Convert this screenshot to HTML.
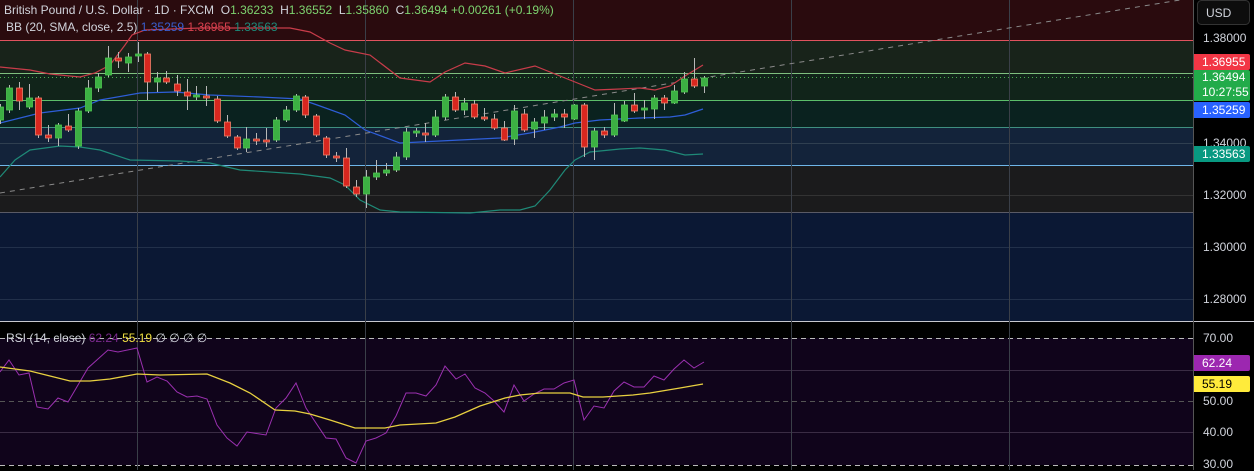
<!DOCTYPE html>
<html><head><meta charset="utf-8"><style>
html,body{margin:0;padding:0;background:#000;width:1254px;height:470px;overflow:hidden;font-family:"Liberation Sans",sans-serif}
#c{position:absolute;left:0;top:0}
.t{position:absolute;font-size:12px;color:#d1d4dc;white-space:nowrap;line-height:14px}
.ax{position:absolute;left:1203px;font-size:12px;color:#d1d4dc;line-height:14px}
.bd{position:absolute;left:1194px;width:56px;font-size:12px;line-height:16px;color:#fff;padding-left:8px;box-sizing:border-box;border-radius:0 2px 2px 0}
</style></head><body>
<svg id="c" width="1254" height="470" xmlns="http://www.w3.org/2000/svg">
<rect x="0" y="0" width="1193" height="40" fill="#2a0b0e"/>
<rect x="0" y="40" width="1193" height="33" fill="#18231a"/>
<rect x="0" y="73" width="1193" height="27" fill="#11241a"/>
<rect x="0" y="100" width="1193" height="27" fill="#0a221f"/>
<rect x="0" y="127" width="1193" height="38" fill="#13233a"/>
<rect x="0" y="165" width="1193" height="47" fill="#1b1b1c"/>
<rect x="0" y="212" width="1193" height="109" fill="#0b1834"/>
<line x1="0" y1="40.5" x2="1193" y2="40.5" stroke="#e0525e" stroke-width="1"/>
<line x1="0" y1="73.5" x2="1193" y2="73.5" stroke="#7fbf7f"/>
<line x1="0" y1="77.5" x2="1193" y2="77.5" stroke="#4caf50" stroke-dasharray="1,3"/>
<line x1="0" y1="100.5" x2="1193" y2="100.5" stroke="#5cbf6a"/>
<line x1="0" y1="127.5" x2="1193" y2="127.5" stroke="#3f8f80"/>
<line x1="0" y1="143.5" x2="1193" y2="143.5" stroke="#2f3f50"/>
<line x1="0" y1="165.5" x2="1193" y2="165.5" stroke="#6fb6e8"/>
<line x1="0" y1="195.5" x2="1193" y2="195.5" stroke="#333"/>
<line x1="0" y1="212.5" x2="1193" y2="212.5" stroke="#5a5a66"/>
<line x1="0" y1="247.5" x2="1193" y2="247.5" stroke="#22304a"/>
<line x1="0" y1="299.5" x2="1193" y2="299.5" stroke="#22304a"/>
<rect x="0" y="322" width="1193" height="148" fill="#000"/>
<rect x="0" y="338" width="1193" height="127" fill="#10041b"/>
<line x1="0" y1="321.5" x2="1254" y2="321.5" stroke="#c8c8d0"/>
<line x1="1193.5" y1="0" x2="1193.5" y2="470" stroke="#555"/>
<line x1="0" y1="338.5" x2="1193" y2="338.5" stroke="#bbb" stroke-dasharray="5,4"/>
<line x1="0" y1="465.5" x2="1193" y2="465.5" stroke="#bbb" stroke-dasharray="5,4"/>
<line x1="0" y1="401.5" x2="1193" y2="401.5" stroke="#555" stroke-dasharray="5,4"/>
<line x1="0" y1="370.5" x2="1193" y2="370.5" stroke="#3a2c44"/>
<line x1="0" y1="432.5" x2="1193" y2="432.5" stroke="#3a2c44"/>
<g stroke="#3a3f48">
<line x1="137.5" y1="0" x2="137.5" y2="470"/><line x1="365.5" y1="0" x2="365.5" y2="470"/>
<line x1="573.5" y1="0" x2="573.5" y2="470"/><line x1="791.5" y1="0" x2="791.5" y2="470"/>
<line x1="1009.5" y1="0" x2="1009.5" y2="470"/></g>
<line x1="0" y1="193" x2="1180" y2="0" stroke="#8a8a8a" stroke-dasharray="5,5"/>
<g id="bb" fill="none" stroke-width="1.2"></g>
<g id="cd"></g>
<g id="rsi" fill="none"></g>
<rect x="1197.5" y="0.5" width="52" height="24" rx="4" fill="#0d0d0d" stroke="#333"/>
</svg>
<div class="t" style="left:4px;top:3px;color:#d1d4dc">British Pound / U.S. Dollar · 1D · FXCM &nbsp;O<span style="color:#7dd36f">1.36233</span> &nbsp;H<span style="color:#7dd36f">1.36552</span> &nbsp;L<span style="color:#7dd36f">1.35860</span> &nbsp;C<span style="color:#7dd36f">1.36494</span> <span style="color:#7dd36f">+0.00261 (+0.19%)</span></div>
<div class="t" style="left:6px;top:20px">BB (20, SMA, close, 2.5) <span style="color:#3a5fd0">1.35259</span> <span style="color:#d9404e">1.36955</span> <span style="color:#1c8a7a">1.33563</span></div>
<div class="t" style="left:6px;top:331px">RSI (14, close) <span style="color:#7b2a8e">62.24</span> <span style="color:#f0e040">55.19</span> ∅ ∅ ∅ ∅</div>
<div class="t" style="left:1206px;top:6px">USD</div>
<div class="ax" style="top:31px">1.38000</div>
<div class="ax" style="top:136px">1.34000</div>
<div class="ax" style="top:188px">1.32000</div>
<div class="ax" style="top:240px">1.30000</div>
<div class="ax" style="top:292px">1.28000</div>
<div class="ax" style="top:331px">70.00</div>
<div class="ax" style="top:394px">50.00</div>
<div class="ax" style="top:425px">40.00</div>
<div class="ax" style="top:457px">30.00</div>
<div class="bd" style="top:54px;background:#f23645">1.36955</div>
<div class="bd" style="top:70px;height:31px;background:#22ab4a;line-height:15px">1.36494<br>10:27:55</div>
<div class="bd" style="top:102px;background:#2962ff">1.35259</div>
<div class="bd" style="top:146px;background:#089981">1.33563</div>
<div class="bd" style="top:355px;background:#9c27b0">62.24</div>
<div class="bd" style="top:376px;background:#ffeb3b;color:#000">55.19</div>
<script>
var NS="http://www.w3.org/2000/svg";
function pl(g,pts,col,w){var p=document.createElementNS(NS,"polyline");p.setAttribute("points",pts.map(function(a){return a.join(",")}).join(" "));p.setAttribute("stroke",col);p.setAttribute("fill","none");p.setAttribute("stroke-width",w||1.2);g.appendChild(p);}
var bb=document.getElementById("bb");
pl(bb,[[0,67],[30,70],[50,74],[80,77],[95,73],[110,65],[125,45],[132,35],[145,30],[200,28],[290,28],[310,32],[330,43],[345,50],[370,55],[400,78],[430,82],[445,72],[465,63],[485,66],[505,73],[535,66],[560,76],[575,82],[595,90],[620,89],[640,88],[655,90],[670,86],[685,76],[703,65]],"#c83c4a");
pl(bb,[[0,123],[40,113],[80,108],[100,100],[140,93],[175,92],[210,95],[260,97],[300,99],[320,106],[345,115],[365,130],[400,143],[440,141],[480,139],[500,138],[530,133],[560,127],[575,123],[600,120],[640,118],[670,117],[685,115],[703,109]],"#2e5ed8");
pl(bb,[[0,177],[15,160],[30,150],[60,146],[80,147],[100,150],[130,160],[180,161],[210,163],[240,170],[300,174],[330,178],[345,185],[360,200],[380,210],[400,212],[470,213],[500,210],[520,210],[535,206],[550,190],[565,170],[575,160],[590,152],[620,149],[640,148],[665,150],[685,155],[703,154]],"#1f8a78");
var C=[[0,107,120,104,124,'g'],[9,88,110,85,113,'g'],[19,88,101,82,110,'r'],[29,98,107,84,109,'g'],[38,98,135,96,138,'r'],[48,135,138,125,142,'r'],[58,125,138,123,146,'g'],[68,126,130,114,132,'r'],[78,111,146,108,149,'g'],[88,88,111,80,113,'g'],[98,77,88,73,92,'g'],[108,58,75,46,77,'g'],[118,58,61,52,68,'r'],[128,57,63,53,72,'g'],[138,54,56,42,62,'g'],[147,54,82,52,100,'r'],[157,78,82,72,92,'g'],[166,78,82,71,84,'r'],[177,84,91,75,96,'r'],[187,92,96,79,110,'r'],[196,95,97,86,100,'g'],[206,96,98,86,106,'r'],[217,99,121,96,123,'r'],[227,122,136,115,138,'r'],[237,137,148,135,150,'r'],[246,139,148,127,152,'g'],[256,139,140,133,145,'r'],[266,140,141,128,147,'r'],[276,120,140,117,142,'g'],[286,110,120,106,122,'g'],[296,96,110,94,112,'g'],[305,97,115,95,118,'r'],[316,116,135,114,137,'r'],[326,138,155,136,158,'r'],[336,156,158,152,162,'r'],[346,158,186,148,188,'r'],[356,187,194,180,197,'r'],[366,177,194,170,208,'g'],[376,173,177,160,180,'g'],[386,170,173,163,176,'g'],[396,157,170,152,172,'g'],[406,132,157,128,160,'g'],[416,131,133,128,137,'g'],[425,133,135,123,142,'r'],[435,117,135,110,137,'g'],[445,97,117,94,120,'g'],[455,97,110,92,112,'r'],[464,103,110,98,115,'g'],[474,104,117,100,119,'r'],[484,117,119,108,121,'r'],[494,119,128,114,130,'r'],[504,128,140,121,141,'r'],[514,111,139,105,145,'g'],[524,114,130,109,132,'r'],[534,122,129,118,138,'g'],[544,117,123,110,130,'g'],[554,114,117,109,121,'g'],[564,114,117,109,128,'r'],[574,105,119,104,120,'g'],[584,105,147,103,157,'r'],[594,131,147,128,160,'g'],[604,131,135,127,138,'r'],[614,115,135,103,137,'g'],[624,105,121,101,122,'g'],[634,105,111,93,113,'r'],[644,108,110,100,119,'g'],[654,98,109,95,119,'g'],[664,98,103,95,110,'r'],[674,91,103,85,104,'g'],[684,79,92,72,94,'g'],[694,79,86,58,88,'r'],[704,78,86,76,93,'g']];
var cd=document.getElementById("cd");
C.forEach(function(c){var col=c[5]=='g'?'#3cb043':'#d8271f',bc=c[5]=='g'?'#4ec752':'#f0806a';
var l=document.createElementNS(NS,"line");l.setAttribute("x1",c[0]+.5);l.setAttribute("x2",c[0]+.5);l.setAttribute("y1",c[3]);l.setAttribute("y2",c[4]);l.setAttribute("stroke","#b8b8b8");cd.appendChild(l);
var r=document.createElementNS(NS,"rect");r.setAttribute("x",c[0]-2.5);r.setAttribute("y",c[1]);r.setAttribute("width",6);r.setAttribute("height",Math.max(2,c[2]-c[1]));r.setAttribute("fill",col);r.setAttribute("stroke",bc);r.setAttribute("stroke-width",.8);cd.appendChild(r);});
var rs=document.getElementById("rsi");
pl(rs,[[0,372],[9,360],[19,375],[29,373],[37,407],[48,409],[58,398],[68,402],[88,368],[108,350],[118,352],[137,348],[147,382],[157,377],[167,381],[177,392],[187,397],[197,396],[207,399],[217,425],[227,438],[237,446],[247,432],[266,435],[276,408],[286,398],[296,383],[306,408],[326,438],[336,439],[346,458],[356,463],[366,441],[376,438],[386,433],[396,416],[406,393],[416,393],[426,396],[436,385],[445,366],[456,379],[465,374],[475,388],[485,393],[494,401],[504,412],[514,385],[524,401],[534,394],[544,389],[554,389],[564,383],[574,380],[584,420],[594,406],[604,408],[614,391],[624,382],[634,387],[644,387],[654,376],[664,380],[674,369],[684,360],[694,368],[704,362]],"#9b30b0",1);
pl(rs,[[0,367],[30,371],[50,376],[70,381],[90,381],[110,379],[137,374],[160,375],[207,374],[230,383],[250,393],[275,410],[295,411],[310,414],[330,420],[355,428],[385,428],[400,425],[436,423],[455,417],[480,406],[505,398],[520,395],[540,393],[570,393],[583,397],[603,397],[633,395],[650,393],[680,388],[703,384]],"#e8d040",1.3);
</script>
</body></html>
